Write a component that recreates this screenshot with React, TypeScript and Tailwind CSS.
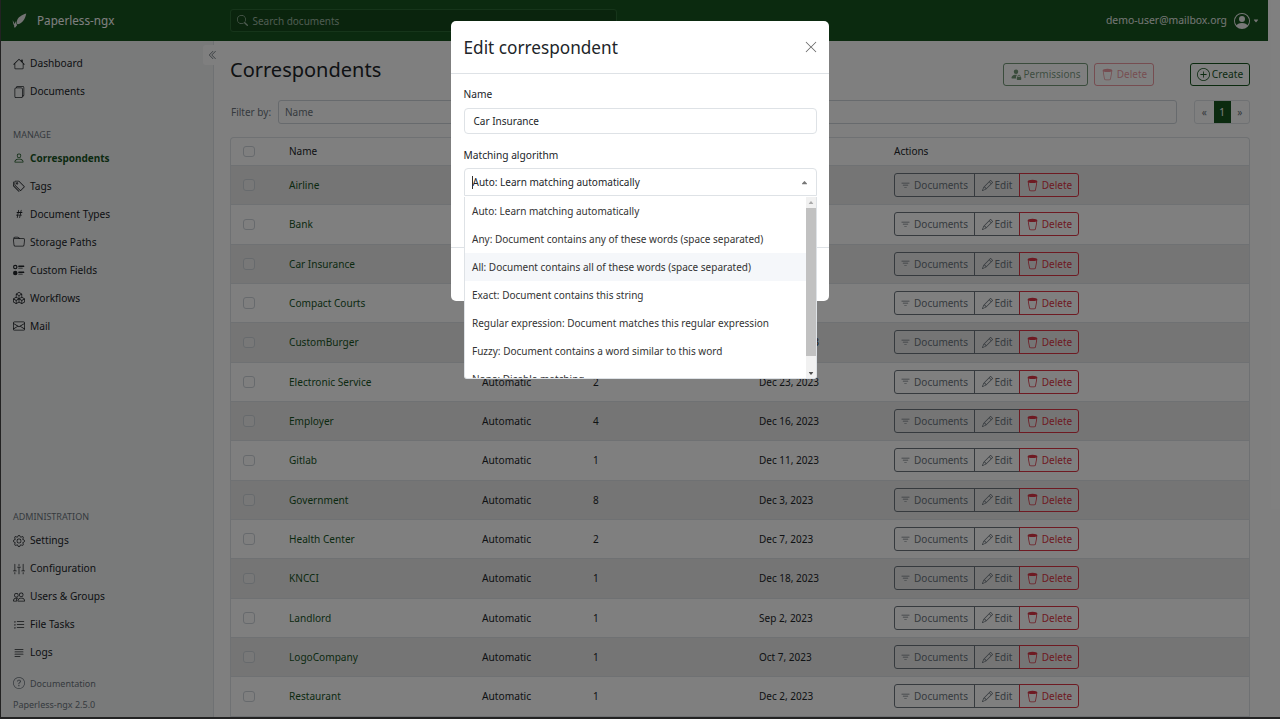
import React from "react";
import {
  BsHouse, BsFiles, BsPerson, BsTags, BsHash, BsFolder, BsUiRadios, BsBoxes, BsEnvelope,
  BsGear, BsSliders2Vertical, BsPeople, BsListTask, BsJustifyLeft, BsQuestionCircle,
  BsPersonCircle, BsSearch, BsChevronDoubleLeft, BsFilter, BsPencil, BsTrash2,
  BsPersonFillLock, BsPlusCircle, BsXLg, BsCaretDownFill, BsCaretUpFill,
} from "react-icons/bs";

const manage = [
  { label: "Correspondents", Icon: BsPerson, active: true },
  { label: "Tags", Icon: BsTags },
  { label: "Document Types", Icon: BsHash },
  { label: "Storage Paths", Icon: BsFolder },
  { label: "Custom Fields", Icon: BsUiRadios },
  { label: "Workflows", Icon: BsBoxes },
  { label: "Mail", Icon: BsEnvelope },
];
const admin = [
  { label: "Settings", Icon: BsGear },
  { label: "Configuration", Icon: BsSliders2Vertical },
  { label: "Users & Groups", Icon: BsPeople },
  { label: "File Tasks", Icon: BsListTask },
  { label: "Logs", Icon: BsJustifyLeft },
];
const rows = [
  ["Airline", "2", "Dec 4, 2023"],
  ["Bank", "5", "Dec 8, 2023"],
  ["Car Insurance", "3", "Dec 1, 2023"],
  ["Compact Courts", "1", "Dec 5, 2023"],
  ["CustomBurger", "2", "Dec 13, 2023"],
  ["Electronic Service", "2", "Dec 23, 2023"],
  ["Employer", "4", "Dec 16, 2023"],
  ["Gitlab", "1", "Dec 11, 2023"],
  ["Government", "8", "Dec 3, 2023"],
  ["Health Center", "2", "Dec 7, 2023"],
  ["KNCCI", "1", "Dec 18, 2023"],
  ["Landlord", "1", "Sep 2, 2023"],
  ["LogoCompany", "1", "Oct 7, 2023"],
  ["Restaurant", "1", "Dec 2, 2023"],
];
const options = [
  "Auto: Learn matching automatically",
  "Any: Document contains any of these words (space separated)",
  "All: Document contains all of these words (space separated)",
  "Exact: Document contains this string",
  "Regular expression: Document matches this regular expression",
  "Fuzzy: Document contains a word similar to this word",
  "None: Disable matching",
];

function NavItem({ label, Icon, active }: { label: string; Icon: React.ComponentType<{ className?: string }>; active?: boolean }) {
  return (
    <div className={`flex h-7 items-center gap-[5px] pl-[13px] ${active ? "text-[10px] font-bold text-[#17541f]" : "text-[10.200px] text-[#212529]"}`}>
      <Icon className="h-3 w-3 shrink-0" />
      <span>{label}</span>
    </div>
  );
}

function Check() {
  return <span className="block h-[11.500px] w-[11.500px] rounded-[3px] border border-[#ced4da] bg-white/30" />;
}

export default function App() {
  return (
    <div className="relative h-[719px] w-[1280px] overflow-hidden bg-white font-['Noto_Sans',sans-serif] text-[10px] leading-none text-[#212529]">
      <div className="flex h-[41px] w-[1268px] items-center bg-[#17541f] text-white">
        <svg viewBox="0 0 20 20" className="ml-[12px] h-[15px] w-[15px]" fill="#e8e8e8">
          <path d="M19 0.500C13 2.500 7.500 5.500 6.500 10.500 6.200 12.500 6.500 14 7.200 15 13 14.500 17.500 8.500 19 0.500Z" />
          <path d="M1 9.500C2 11.500 2.800 13 3.600 14.500 4.200 12.500 4.800 11.500 5.500 11 5.600 13 6 15 6.800 16.200L4 19.500 2.600 18.500 3.200 17.200C1.800 15 1 12.500 1 9.500Z" />
        </svg>
        <span className="ml-[10px] text-[11.700px]">Paperless-ngx</span>
        <div className="ml-[116px] flex h-[23px] w-[387px] items-center gap-[4px] rounded-[3px] border border-[#2d6a35] bg-[#14491b] pl-[6px] text-[#9fb8a3]">
          <BsSearch className="h-[11px] w-[11px]" />
          <span>Search documents</span>
        </div>
        <span className="ml-auto mr-px text-[10.400px] text-[#e8ece8]">demo-user@mailbox.org</span>
        <BsPersonCircle className="ml-[6px] h-4 w-4 text-[#f0f0f0]" />
        <BsCaretDownFill className="ml-[3px] mr-[9px] h-[6px] w-[6px] text-[#e8e8e8]" />
      </div>

      <div className="flex h-[678px]">
        <aside className="relative flex w-[214px] shrink-0 flex-col border-r border-[#dee2e6] bg-[#f3f4f5] pt-[8.500px]">
          <NavItem label="Dashboard" Icon={BsHouse} />
          <NavItem label="Documents" Icon={BsFiles} />
          <div className="ml-[13px] mt-[24px] mb-[3.500px] h-[11px] text-[9px] text-[#6c757d]">MANAGE</div>
          {manage.map((m) => <NavItem key={m.label} {...m} />)}
          <div className="mt-auto ml-[13px] mb-[4px] h-[11px] text-[9px] text-[#6c757d]">ADMINISTRATION</div>
          {admin.map((m) => <NavItem key={m.label} {...m} />)}
          <div className="ml-[13px] mt-[9.500px] flex h-[14px] items-center gap-[5px] text-[9px] text-[#6c757d]">
            <BsQuestionCircle className="h-3 w-3" />
            <span>Documentation</span>
          </div>
          <div className="ml-[13px] mb-[8px] mt-[10px] h-[11px] text-[9px] text-[#6c757d]">Paperless-ngx 2.5.0</div>
          <div className="absolute right-[-9px] top-[4px] flex h-5 w-[19px] items-center justify-center rounded-[3px] bg-white text-[#6c757d]">
            <BsChevronDoubleLeft className="h-[10px] w-[10px]" />
          </div>
        </aside>

        <main className="min-w-0 flex-1 pl-[16px] pr-[30px]">
          <div className="mt-[22px] flex h-[23px] items-center">
            <h1 className="-mt-[3.500px] self-start text-[20px] text-[#212529]">Correspondents</h1>
            <button className="ml-auto flex h-[23px] w-[85px] items-center justify-center gap-[2px] rounded-[3px] border border-[#17541f]/60 pb-px pr-px text-[#17541f]/60">
              <BsPersonFillLock className="h-3 w-3" /> Permissions
            </button>
            <button className="ml-[6px] flex h-[23px] w-[60px] items-center justify-center gap-[3px] rounded-[3px] border border-[#dc3545]/50 pb-px text-[#dc3545]/50">
              <BsTrash2 className="h-[13px] w-[13px]" /> Delete
            </button>
            <button className="ml-[36px] flex h-[23px] w-[60px] items-center justify-center gap-[2px] rounded-[3px] border border-[#17541f] text-[10.200px] text-[#17541f]">
              <BsPlusCircle className="h-[13px] w-[13px]" /> Create
            </button>
          </div>
          <div className="mt-[14px] flex h-[24px] items-center">
            <span className="w-[48px] pl-px text-[#6c757d]">Filter by:</span>
            <div className="flex h-full w-[899px] items-center rounded-[3px] border border-[#ced4da] pl-[6px] text-[#6c757d]">Name</div>
            <div className="ml-auto flex h-full w-[56px] items-stretch overflow-hidden rounded-[3px] border border-[#dee2e6] text-[#6c757d]">
              <span className="flex flex-1 items-center justify-center">«</span>
              <span className="flex w-[17px] items-center justify-center bg-[#17541f] text-white">1</span>
              <span className="flex flex-1 items-center justify-center">»</span>
            </div>
          </div>
          <div className="mt-[12.500px] overflow-hidden rounded-t-[4px] border border-b-0 border-[#dee2e6]">
            <table className="w-full table-fixed border-collapse">
              <thead>
                <tr className="h-[28px] border-b border-[#dee2e6] text-left">
                  <th className="w-[58px] pl-[12px] font-normal"><Check /></th>
                  <th className="w-[193px] font-normal">Name</th>
                  <th className="w-[111px] font-normal">Matching</th>
                  <th className="w-[166px] font-normal">Document count</th>
                  <th className="w-[135px] font-normal">Last used</th>
                  <th className="font-normal">Actions</th>
                </tr>
              </thead>
              <tbody>
                {rows.map((r, i) => (
                  <tr key={r[0]} className={`h-[39.330px] border-b border-[#dee2e6] ${i % 2 === 0 ? "bg-[#ebebeb]" : ""}`}>
                    <td className="pl-[12px]"><Check /></td>
                    <td className="text-[10.100px] text-[#17541f]">{r[0]}</td>
                    <td className="text-[10.200px]">Automatic</td>
                    <td>{r[1]}</td>
                    <td>{r[2]}</td>
                    <td>
                      <div className="flex h-[24px] w-[185px]">
                        <span className="flex w-[81px] items-center justify-center gap-[3px] rounded-l-[3px] border border-[#6c757d] pr-px text-[#6c757d]">
                          <BsFilter className="h-[11px] w-[11px]" /> Documents
                        </span>
                        <span className="-ml-px flex w-[46px] items-center justify-center gap-[2px] border border-[#6c757d] text-[#6c757d]">
                          <BsPencil className="h-[11px] w-[11px]" /> Edit
                        </span>
                        <span className="-ml-px flex w-[60px] items-center justify-center gap-[3px] rounded-r-[3px] border border-[#dc3545] text-[#dc3545]">
                          <BsTrash2 className="h-[13px] w-[13px]" /> Delete
                        </span>
                      </div>
                    </td>
                  </tr>
                ))}
              </tbody>
            </table>
          </div>
        </main>
      </div>

      {/* backdrop */}
      <div className="absolute inset-0 bg-black/50" />
      <div className="absolute inset-y-0 left-0 w-px bg-[#222]" />
      <div className="absolute inset-x-0 bottom-0 h-[2px] bg-[#222]" />

      {/* modal */}
      <div className="absolute left-[451px] top-[21px] h-[280px] w-[378px] rounded-[5px] bg-white">
        <div className="flex h-[53px] items-center justify-between border-b border-[#dee2e6] pl-[12.500px] pr-[11px]">
          <h2 className="pt-px text-[17.200px] text-[#212529]">Edit correspondent</h2>
          <BsXLg className="h-[14px] w-[14px] text-[#666]" />
        </div>
        <div className="px-[12.500px] pt-[13px]">
          <label className="block h-[14px] text-[10.200px] leading-[14px]">Name</label>
          <div className="mt-[7px] flex h-[26px] items-center rounded-[4px] border border-[#dee2e6] pl-[9px]">Car Insurance</div>
          <label className="mt-[14px] block h-[14px] text-[10.200px] leading-[14px]">Matching algorithm</label>
          <div className="relative mt-[6px] flex h-[28px] items-center rounded-t-[4px] border border-[#dee2e6] pl-[8px]">
            <span className="absolute left-[7px] h-[13px] w-px bg-[#333]" />
            <span className="leading-none">{options[0]}</span>
            <BsCaretUpFill className="absolute right-[8px] h-[7px] w-[7px] text-[#777]" />
          </div>
        </div>
        <div className="absolute inset-x-0 top-[226px] border-t border-[#dee2e6]" />
      </div>

      {/* dropdown */}
      <div className="absolute left-[463.500px] top-[197px] flex h-[182px] w-[353px] overflow-hidden rounded-b-[3px] border border-t-0 border-[#dee2e6] bg-white text-[#333]">
        <div className="flex-1">
          {options.map((o, i) => (
            <div key={o} className={`flex h-[28px] items-center pl-[7.500px] ${i === 2 ? "bg-[#f5f7fa]" : ""}`}>{o}</div>
          ))}
        </div>
        <div className="flex w-[10px] shrink-0 flex-col items-center bg-[#f1f1f1]">
          <BsCaretUpFill className="mt-[1px] h-[9px] w-[6px] text-[#aaa]" />
          <div className="mt-[1px] h-[148px] w-full bg-[#c1c1c1]" />
          <BsCaretDownFill className="mt-[13px] h-[9px] w-[6px] text-[#505050]" />
        </div>
      </div>
    </div>
  );
}
